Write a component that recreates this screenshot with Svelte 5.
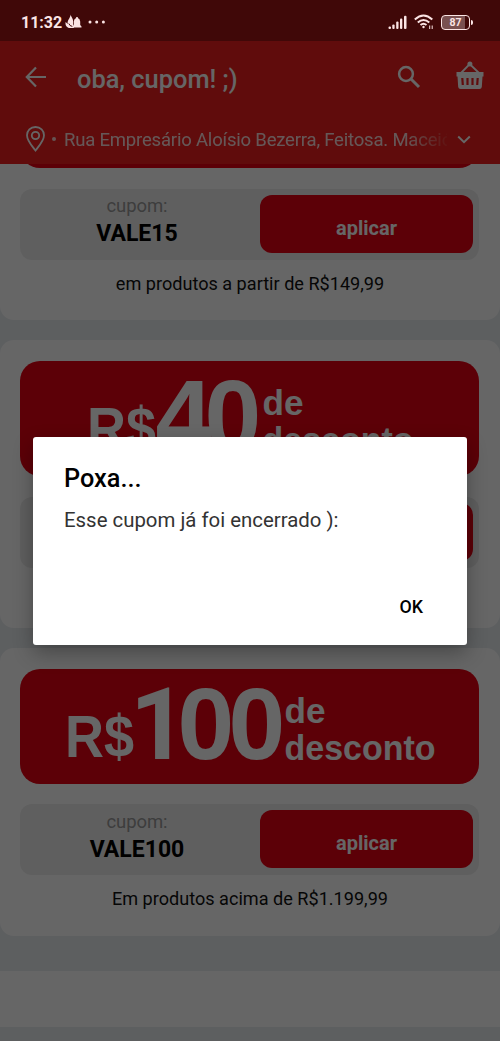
<script lang="ts">
  type Coupon = {
    code: string;
    value: string;
    digitsX: number[];
    currencyX: number;
    labelX: number;
    note: string;
  };

  const coupons: Coupon[] = [
    { code: 'VALE15', value: '', digitsX: [], currencyX: 0, labelX: 0, note: 'em produtos a partir de R$149,99' },
    { code: 'VALE40', value: '40', digitsX: [135.5, 184.5], currencyX: 67, labelX: 242.5, note: '' },
    { code: 'VALE100', value: '100', digitsX: [110, 157.5, 208.5], currencyX: 45, labelX: 264.5, note: 'Em produtos acima de R$1.199,99' },
  ];

  let open = $state(true);
</script>

<div class="screen">
  <div class="status">
    <span class="time">11:32</span>
    <svg class="notif" width="17" height="16" viewBox="0 0 17 16">
      <path d="M5.500 0.500C6 3 9 5 8 9.500L9 14H5C2 14 0 11.500 0.600 8L2.800 10C1.800 6 5.500 4.500 5.500 0.500Z" fill="#fbe4e4" />
      <path d="M3.800 9.500Q4.500 12 7.500 12.500" fill="none" stroke="#400808" stroke-width="1" />
      <path d="M7.500 13.500V12.500L8.800 11V7.500Q9 4.500 11.200 4V3H12.800V4Q15 4.500 15.200 7.500V11L16.500 12.500V13.500Z" fill="#fbe4e4" />
    </svg>
    <svg class="dots" width="18" height="4" viewBox="0 0 18 4" fill="#fbe4e4">
      <circle cx="2" cy="2" r="1.500" /><circle cx="8.700" cy="2" r="1.500" /><circle cx="15.400" cy="2" r="1.500" />
    </svg>
    <svg class="signal" width="20" height="15" viewBox="0 0 20 15" fill="#fbe4e4">
      <rect x="0.500" y="11.500" width="2.500" height="2.500" rx="1" />
      <rect x="4.300" y="9.500" width="2.300" height="4.500" rx="1" />
      <rect x="8.200" y="6.500" width="2.300" height="7.500" rx="1" />
      <rect x="12" y="3.500" width="2.300" height="10.500" rx="1" />
      <rect x="16" y="0.700" width="2.500" height="13.300" rx="1" />
    </svg>
    <svg class="wifi" width="20" height="16" viewBox="0 0 20 16" fill="none" stroke="#fbe4e4" stroke-width="2">
      <path d="M0.800 5.500Q9.500 -2.500 18.300 5.500" />
      <path d="M3.800 8.500Q9.500 3.500 15.300 8.500" />
      <path d="M6.500 11Q9.500 8.500 12.500 11" />
      <circle cx="9.500" cy="13" r="1.200" fill="#fbe4e4" stroke="none" />
      <path d="M15.700 11.500V15M18.200 11.500V15" stroke-width="1" />
    </svg>
    <div class="battery"><span>87</span></div>
  </div>

  <header>
    <div class="bar">
      <svg class="back" width="22" height="22" viewBox="0 0 22 22" fill="none" stroke="#fff" stroke-width="2.200">
        <path d="M21 11H2M11 1.500L1.800 11L11 20.500" />
      </svg>
      <h1>oba, cupom! ;)</h1>
      <svg class="search" width="24" height="24" viewBox="0 0 24 24" fill="none" stroke="#fff">
        <circle cx="9" cy="9" r="6.900" stroke-width="2.500" />
        <path d="M14 14L22 22" stroke-width="3" />
      </svg>
      <svg class="basket" width="28" height="29" viewBox="0 0 28 29">
        <path d="M5 12L13.700 3L23 12" fill="none" stroke="#fff" stroke-width="1.800" />
        <circle cx="13.900" cy="3" r="2.500" fill="#fff" />
        <path d="M0.500 11H27.500V15.500H26.500L25.800 26Q25.500 28 23.500 28H4.500Q2.500 28 2.200 26L1.500 15.500H0.500Z" fill="#fff" />
        <path d="M6.300 17L6.800 24M11.500 17V24M16.500 17V24M21.700 17L21.200 24" fill="none" stroke="#f0201e" stroke-width="2.200" />
      </svg>
    </div>
    <div class="address">
      <svg width="19" height="26" viewBox="0 0 19 26" fill="none" stroke="#fff" stroke-width="1.800">
        <path d="M9.500 1C4.500 1 1 4.700 1 9.300C1 15 6.500 20.500 9.500 24.500C12.500 20.500 18 15 18 9.300C18 4.700 14.500 1 9.500 1Z" />
        <circle cx="9.500" cy="9.500" r="3.700" />
      </svg>
      <i class="bullet"></i>
      <span class="street">Rua Empresário Aloísio Bezerra, Feitosa. Maceió</span>
      <svg class="chevron" width="14" height="9" viewBox="0 0 14 9" fill="none" stroke="#fff" stroke-width="2">
        <path d="M1.200 1.500L7 7.200L12.800 1.500" />
      </svg>
    </div>
  </header>

  <main>
    <div class="list">
      {#each coupons as coupon}
        <section class="card">
          <svg class="banner" viewBox="0 0 459 115" width="459" height="115">
            {#if coupon.value}
              <text x={coupon.currencyX} y="88" font-size="59" textLength="69" lengthAdjust="spacingAndGlyphs">R$</text>
              {#each coupon.value as digit, i}
                <text class:one={digit === '1'} x={coupon.digitsX[i]} y="90" font-size="102">{digit}</text>
              {/each}
              <text x={coupon.labelX} y="53.500" font-size="35.500" textLength="41" lengthAdjust="spacingAndGlyphs">de</text>
              <text x={coupon.labelX} y="90.500" font-size="35.500" textLength="151" lengthAdjust="spacingAndGlyphs">desconto</text>
            {/if}
          </svg>
          <div class="row">
            <div class="code">
              <span>cupom:</span>
              <strong>{coupon.code}</strong>
            </div>
            <button class="apply" onclick={() => (open = true)}>aplicar</button>
          </div>
          <p>{coupon.note}</p>
        </section>
      {/each}
    </div>
    <div class="footer"></div>
  </main>

  {#if open}
    <div class="scrim"></div>
    <div class="dialog" role="alertdialog">
      <h2>Poxa...</h2>
      <p>Esse cupom já foi encerrado ):</p>
      <button onclick={() => (open = false)}>OK</button>
    </div>
  {/if}
</div>

<style>
  :global(body) {
    margin: 0;
    background: #5d5f61;
  }
  .screen {
    position: relative;
    display: flex;
    flex-direction: column;
    width: 500px;
    height: 1041px;
    overflow: hidden;
    font-family: Roboto, sans-serif;
    background: #e9edf1;
  }
  button {
    border: none;
    padding: 0;
    font-family: inherit;
    cursor: pointer;
  }
  .status {
    position: relative;
    z-index: 3;
    flex: none;
    display: flex;
    align-items: center;
    box-sizing: border-box;
    height: 41px;
    padding: 3px 30px 0 21px;
    background: #400808;
    color: #fbe4e4;
  }
  .time {
    font-size: 16px;
    font-weight: 700;
    width: 44px;
  }
  .dots {
    margin-left: 6px;
  }
  .signal {
    margin-left: auto;
  }
  .wifi {
    margin: 0 7px 0 6px;
  }
  .battery {
    position: relative;
    box-sizing: border-box;
    width: 29px;
    height: 15px;
    border: 1.5px solid #fbe4e4;
    border-radius: 4px;
    font-size: 10.5px;
    font-weight: 700;
    line-height: 13px;
    text-align: center;
    background: linear-gradient(90deg, #795050 84%, #400808 84%);
  }
  .battery::after {
    content: '';
    position: absolute;
    right: -4px;
    top: 4px;
    width: 2px;
    height: 5px;
    border-radius: 0 2px 2px 0;
    background: #fbe4e4;
  }
  header {
    position: relative;
    z-index: 1;
    flex: none;
    height: 123px;
    background: #f0201e;
    color: #fff;
  }
  .bar {
    display: flex;
    align-items: center;
    height: 74px;
    padding: 0 16px 0 25px;
  }
  .back {
    margin-top: -2px;
  }
  h1 {
    margin: 2px auto 0 30px;
    font-size: 25.4px;
    font-weight: 500;
    line-height: 30px;
  }
  .search {
    margin: -2px 35px 0 0;
  }
  .basket {
    margin: -5px 0 0;
  }
  .address {
    display: flex;
    align-items: center;
    height: 48px;
    padding: 0 29px 0 26px;
  }
  .bullet {
    width: 4px;
    height: 4px;
    margin: 0 8px 0 7px;
    border-radius: 50%;
    background: #fff;
    opacity: 0.8;
  }
  .street {
    width: 383px;
    margin-top: 1px;
    overflow: hidden;
    white-space: nowrap;
    font-size: 18.5px;
    letter-spacing: -0.19px;
    line-height: 26px;
    opacity: 0.85;
    -webkit-mask-image: linear-gradient(90deg, #000 89%, transparent 101%);
    mask-image: linear-gradient(90deg, #000 89%, transparent 101%);
  }
  .chevron {
    margin-left: auto;
  }
  main {
    flex: none;
    margin-top: -132px;
  }
  .list {
    display: flex;
    flex-direction: column;
    gap: 20px;
  }
  .card {
    box-sizing: border-box;
    height: 288px;
    padding: 21px 21px 0 20px;
    border-radius: 14px;
    background: #fff;
  }
  .banner {
    display: block;
    border-radius: 20px;
    background: #e60012;
    fill: #fff;
    font-family: 'Liberation Sans', Arial, sans-serif;
    font-weight: 700;
  }
  /* footless numeral */
  .one {
    font-family: Roboto, sans-serif;
    font-size: 100px;
  }
  .row {
    display: flex;
    box-sizing: border-box;
    height: 71px;
    margin-top: 20.5px;
    padding: 6px 6px 7px 0;
    border-radius: 12px;
    background: #eee;
  }
  .card:last-child .row {
    margin-top: 20px;
  }
  .code {
    flex: 1;
    display: flex;
    flex-direction: column;
    align-items: center;
    padding-right: 6px;
  }
  .code span {
    margin-top: 0.5px;
    font-size: 18.5px;
    letter-spacing: -0.1px;
    line-height: 22px;
    color: #999;
  }
  .code strong {
    font-size: 23px;
    line-height: 33px;
    color: #000;
  }
  .apply {
    width: 213px;
    padding-top: 8px;
    border-radius: 12px;
    background: #e60012;
    color: #fff;
    font-size: 20px;
    font-weight: 700;
  }
  .card p {
    margin: 11px -1px 0 0;
    text-align: center;
    font-size: 18.1px;
    line-height: 26px;
    color: #111;
  }
  .footer {
    height: 56px;
    margin-top: 35px;
    background: #fff;
  }
  .scrim {
    position: absolute;
    inset: 0;
    z-index: 2;
    background: rgba(0, 0, 0, 0.6);
  }
  .dialog {
    position: absolute;
    z-index: 4;
    left: 33px;
    top: 437px;
    display: flex;
    flex-direction: column;
    box-sizing: border-box;
    width: 434px;
    height: 208px;
    padding: 26px 44px 0 31px;
    border-radius: 3px;
    background: #fff;
    box-shadow: 0 8px 20px rgba(0, 0, 0, 0.3);
  }
  .dialog h2 {
    margin: 0;
    font-size: 25.3px;
    font-weight: 500;
    line-height: 32px;
    color: #000;
  }
  .dialog p {
    margin: 11px 0 0;
    font-size: 20.4px;
    line-height: 28px;
    color: #333;
  }
  .dialog button {
    align-self: flex-end;
    margin-top: 61px;
    background: none;
    font-size: 17.8px;
    font-weight: 500;
    line-height: 24px;
    color: #000;
  }
</style>
